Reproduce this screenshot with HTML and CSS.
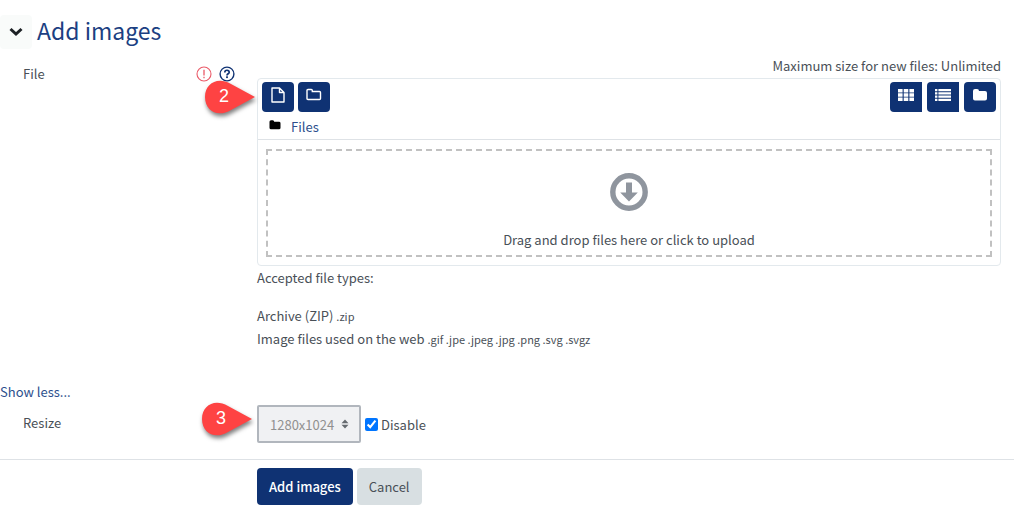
FILE: index.html
```html
<!DOCTYPE html>
<html lang="en">
<head>
  <meta charset="UTF-8">
  <meta name="viewport" content="width=device-width, initial-scale=1.0">
  <title>Add images</title>
  <link rel="stylesheet" href="styles.css">
</head>
<body>
  <form class="add-form">
    <div class="section-header">
      <button type="button" class="toggle" aria-label="Collapse Add images">
        <svg width="14" height="10" viewBox="0 0 14 10"><path d="M1.5 2 L7 7 L12.5 2" fill="none" stroke="#1d2125" stroke-width="3"/></svg>
      </button>
      <h1>Add images</h1>
    </div>

    <!-- File picker -->
    <div class="form-row file-row">
      <div class="row-label">
        <span>File</span>
        <span class="hints">
          <svg width="16" height="16" viewBox="0 0 16 16" role="img" aria-label="Required"><circle cx="8" cy="8" r="7" fill="none" stroke="#ea5a68" stroke-width="1.1"/><path d="M8 3.8 V9.4 M8 10.8 V12.2" stroke="#ea5a68" stroke-width="1.3"/></svg>
          <button type="button" class="help" aria-label="Help with File">
            <svg width="16" height="16" viewBox="0 0 16 16"><circle cx="8" cy="8" r="6.9" fill="none" stroke="#0f3273" stroke-width="1.4"/><path d="M5.8 6.4 C5.8 3.6 10.2 3.6 10.2 6.2 C10.2 7.8 8 7.8 8 9.4" fill="none" stroke="#0f3273" stroke-width="1.7"/><rect x="7.1" y="10.3" width="1.8" height="1.8" fill="#0f3273"/></svg>
          </button>
        </span>
        <span class="marker marker-file">
          <svg width="64" height="46" viewBox="0 0 64 46"><path d="M55 20 L31 7 C18 -1 5 6 5 20 C5 34 18 41 31 33 Z" fill="#fe4343"/></svg>
          <b>2</b>
        </span>
      </div>
      <div class="row-field">
        <p class="restrictions">Maximum size for new files: Unlimited</p>
        <div class="filemanager">
          <div class="toolbar">
            <div class="tools">
              <button type="button" class="tool" aria-label="Add file">
                <svg width="14" height="16" viewBox="0 0 14 16"><path d="M1 1 H8.5 L13 5.5 V15 H1 Z M8.5 1 V5.5 H13" fill="none" stroke="#fff" stroke-width="1.4" stroke-linejoin="round"/></svg>
              </button>
              <button type="button" class="tool" aria-label="Create folder">
                <svg width="16" height="14" viewBox="0 0 16 14"><path d="M1 2.5 Q1 1.5 2 1.5 H5.3 Q6.3 1.5 6.3 2.5 V3.5 H13.5 Q14.5 3.5 14.5 4.5 V10.5 Q14.5 11.5 13.5 11.5 H2 Q1 11.5 1 10.5 Z" fill="none" stroke="#fff" stroke-width="1.4"/></svg>
              </button>
            </div>
            <div class="tools views">
              <button type="button" class="tool joined" aria-label="Icons">
                <svg width="16" height="14" viewBox="0 0 16 14"><path d="M0 1 H4.6 V4.4 H0 Z M5.7 1 H10.3 V4.4 H5.7 Z M11.4 1 H16 V4.4 H11.4 Z M0 5.3 H4.6 V8.7 H0 Z M5.7 5.3 H10.3 V8.7 H5.7 Z M11.4 5.3 H16 V8.7 H11.4 Z M0 9.6 H4.6 V13 H0 Z M5.7 9.6 H10.3 V13 H5.7 Z M11.4 9.6 H16 V13 H11.4 Z" fill="#fff"/></svg>
              </button>
              <button type="button" class="tool joined" aria-label="Details">
                <svg width="16" height="14" viewBox="0 0 16 14"><path d="M0 1 H2.4 V3.2 H0 Z M3.4 1 H16 V3.2 H3.4 Z M0 4.3 H2.4 V6.4 H0 Z M3.4 4.3 H16 V6.4 H3.4 Z M0 7.5 H2.4 V9.7 H0 Z M3.4 7.5 H16 V9.7 H3.4 Z M0 10.8 H2.4 V13 H0 Z M3.4 10.8 H16 V13 H3.4 Z" fill="#fff"/></svg>
              </button>
              <button type="button" class="tool" aria-label="File tree">
                <svg width="16" height="14" viewBox="0 0 16 14"><path d="M1 3 Q1 1 3 1 H5 Q7 1 7 3 H13 Q15 3 15 5 V10.5 Q15 12.5 13 12.5 H3 Q1 12.5 1 10.5 Z" fill="#fff"/></svg>
              </button>
            </div>
          </div>
          <div class="path">
            <svg width="12" height="10" viewBox="0 0 12 10"><path d="M0.5 1.8 Q0.5 0.3 2 0.3 H3.8 Q5.2 0.3 5.2 1.8 H10 Q11.5 1.8 11.5 3.2 V7.8 Q11.5 9.3 10 9.3 H2 Q0.5 9.3 0.5 7.8 Z" fill="#000"/></svg>
            <a href="#">Files</a>
          </div>
          <div class="drop-area">
            <div class="drop-box">
              <svg width="38" height="38" viewBox="0 0 38 38"><circle cx="19" cy="19" r="16.2" fill="none" stroke="#8f959e" stroke-width="5.4"/><path d="M16 9.5 H22 V19.5 H27.8 L19 28.5 L10.2 19.5 H16 Z" fill="#8f959e"/></svg>
              <span>Drag and drop files here or click to upload</span>
            </div>
          </div>
        </div>
        <p class="types-title">Accepted file types:</p>
        <ul class="types">
          <li>Archive (ZIP) <small>.zip</small></li>
          <li>Image files used on the web <small>.gif .jpe .jpeg .jpg .png .svg .svgz</small></li>
        </ul>
      </div>
    </div>

    <a class="show-less" href="#">Show less...</a>

    <!-- Resize options -->
    <div class="form-row resize-row">
      <div class="row-label">
        <label for="resize">Resize</label>
        <span class="marker marker-resize">
          <svg width="64" height="46" viewBox="0 0 64 46"><path d="M55 20 L31 7 C18 -1 5 6 5 20 C5 34 18 41 31 33 Z" fill="#fe4343"/></svg>
          <b>3</b>
        </span>
      </div>
      <div class="row-field resize-field">
        <select id="resize" class="size-select" disabled>
          <option>1280x1024</option>
        </select>
        <input type="checkbox" id="disable" checked>
        <label for="disable">Disable</label>
      </div>
    </div>

    <div class="form-row actions-row">
      <div class="row-field actions">
        <button type="submit" class="btn btn-primary">Add images</button>
        <button type="button" class="btn btn-secondary">Cancel</button>
      </div>
    </div>
  </form>
</body>
</html>
```
FILE: styles.css
```css
* {
  box-sizing: border-box;
}

body {
  margin: 0;
  background-color: #fff;
  color: #495057;
  font-family: "Noto Sans CJK SC", "Noto Sans", sans-serif;
  font-size: 13px;
  line-height: 23px;
}

button,
select {
  font: inherit;
  cursor: pointer;
}

a {
  color: #2d4f8d;
  text-decoration: none;
}

svg {
  display: block;
}

p,
ul {
  margin: 0;
  padding: 0;
}

.add-form {
  padding: 15px 10px 0 0;
}

.section-header {
  display: flex;
  align-items: flex-start;
  gap: 5px;
}

.toggle {
  display: flex;
  justify-content: center;
  align-items: center;
  width: 32px;
  height: 34px;
  padding: 0;
  border: none;
  border-radius: 4px;
  background-color: #f9fbfa;
}

h1 {
  margin: 0;
  color: #1c3f82;
  font-size: 23px;
  font-weight: 400;
  line-height: 30px;
}

.form-row {
  display: grid;
  grid-template-columns: 257px 1fr;
  padding-right: 13px;
}

.row-label {
  position: relative;
  display: flex;
  justify-content: space-between;
  align-items: flex-start;
  padding: 0 22px 0 23px;
}

.row-field {
  grid-column: 2;
}

.file-row {
  margin-top: 5px;
}

.file-row .row-label {
  padding-top: 8px;
}

.hints {
  display: flex;
  align-items: center;
  gap: 7px;
  height: 23px;
}

.help {
  padding: 0;
  border: none;
  background: none;
}

/* Numbered callouts pointing at the field */
.marker {
  position: absolute;
}

.marker svg {
  filter: drop-shadow(1px 3px 2px rgba(0, 0, 0, 0.5));
}

.marker b {
  position: absolute;
  top: 8px;
  left: 19px;
  color: #fff;
  font-family: "Liberation Sans", sans-serif;
  font-size: 18px;
  font-weight: 400;
}

.marker-file {
  top: 23px;
  right: -7px;
}

.marker-resize {
  top: -6px;
  right: -4px;
}

.restrictions {
  padding-bottom: 1px;
  text-align: right;
}

.filemanager {
  border: 1px solid #e3e9ed;
  border-radius: 4px;
}

.toolbar {
  display: flex;
  justify-content: space-between;
  padding: 3px 4px 0;
}

.tools {
  display: flex;
  gap: 4px;
}

.views {
  gap: 5px;
}

.tool {
  display: flex;
  justify-content: center;
  align-items: center;
  width: 32px;
  height: 30px;
  padding: 0 0 4px;
  border: none;
  border-radius: 4px;
  background-color: #0f3273;
}

.joined {
  border-radius: 4px 0 0 4px;
}

.path {
  display: flex;
  align-items: center;
  gap: 10px;
  height: 28px;
  padding: 2px 11px 0;
  border-bottom: 1px solid #dee2e6;
}

.path svg {
  margin-bottom: 4px;
}

.drop-area {
  padding: 9px 8px 8px;
}

.drop-box {
  display: flex;
  flex-direction: column;
  align-items: center;
  gap: 17px;
  padding: 22px 0 4px;
  border: 2px dashed #c1c1c1;
}

.types {
  margin-top: 15px;
  list-style: none;
}

.types small {
  font-size: 11px;
  line-height: 1;
}

.show-less {
  display: block;
  width: max-content;
  margin-top: 30px;
}

.resize-row {
  margin-top: 2px;
}

.resize-row .row-label {
  padding-top: 6px;
}

.resize-field {
  display: flex;
  align-items: center;
}

.size-select {
  width: 104px;
  height: 38px;
  padding: 0 11px;
  border: 2px solid #b1b6bd;
  border-radius: 2px;
  appearance: none;
  background: #f0f1f3 url("data:image/svg+xml,%3Csvg xmlns='http://www.w3.org/2000/svg' viewBox='0 0 8 10'%3E%3Cpath fill='%23666b70' d='M4 0.5L0.5 4.3h7zM4 9.5L0.5 5.7h7z'/%3E%3C/svg%3E") no-repeat right 10px center / 8px 10px;
  color: #909090;
  opacity: 1;
}

#disable {
  width: 13px;
  height: 13px;
  margin: 0 3px 0 4px;
  accent-color: #0075ff;
}

.actions-row {
  margin-top: 16px;
  padding-top: 8px;
  border-top: 1px solid #dee2e6;
}

.actions {
  display: flex;
  gap: 4px;
}

.btn {
  height: 37px;
  padding: 0 12px;
  border: none;
  border-radius: 4px;
}

.btn-primary {
  background-color: #0f3273;
  color: #fff;
  font-weight: 500;
}

.btn-secondary {
  background-color: #d8dfe2;
  color: #495057;
}
```
